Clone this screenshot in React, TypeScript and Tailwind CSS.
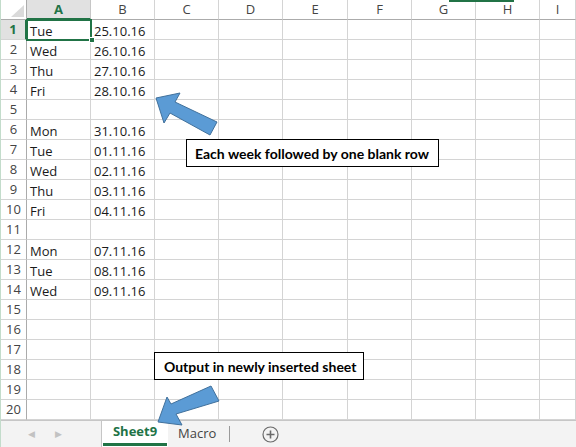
import React from "react";

const COLS = ["A", "B", "C", "D", "E", "F", "G", "H", "I"];
const COL_W = ["w-[64px]", "w-[64px]", "w-[64px]", "w-[64px]", "w-[65px]", "w-[64px]", "w-[64px]", "w-[64px]", "flex-1"];

const DATA: Record<number, [string, string]> = {
  1: ["Tue", "25.10.16"],
  2: ["Wed", "26.10.16"],
  3: ["Thu", "27.10.16"],
  4: ["Fri", "28.10.16"],
  6: ["Mon", "31.10.16"],
  7: ["Tue", "01.11.16"],
  8: ["Wed", "02.11.16"],
  9: ["Thu", "03.11.16"],
  10: ["Fri", "04.11.16"],
  12: ["Mon", "07.11.16"],
  13: ["Tue", "08.11.16"],
  14: ["Wed", "09.11.16"],
};

const rows = Array.from({ length: 20 }, (_, i) => i + 1);

function HeaderRow() {
  return (
    <div className="flex h-[20px]">
      <div className="relative w-[26px] shrink-0 border-r border-b border-[#ababab] bg-white">
        <svg className="absolute left-0 top-0" width="26" height="20">
          <polygon points="10,17 23,17 23,5" fill="#dadada" />
        </svg>
      </div>
      {COLS.map((c, i) => {
        const active = c === "A";
        return (
          <div
            key={c}
            className={
              "shrink-0 flex items-center justify-center text-[13px] leading-none " +
              COL_W[i] +
              (active
                ? " bg-[#e1e1e1] text-[#217346] font-bold border-b-2 border-b-[#217346] border-r border-r-[#c6c6c6]"
                : " bg-white text-[#444] border-b border-b-[#ababab] border-r border-r-[#d4d4d4]")
            }
          >
            {c}
          </div>
        );
      })}
    </div>
  );
}

function Row({ n }: { n: number }) {
  const d = DATA[n];
  const active = n === 1;
  return (
    <div className="flex h-[20px]">
      <div
        className={
          "w-[26px] shrink-0 flex items-center justify-center text-[13px] leading-none border-b border-[#d4d4d4] " +
          (active
            ? "bg-[#e1e1e1] text-[#217346] font-bold border-r-2 border-r-[#217346]"
            : "bg-white text-[#444] border-r border-r-[#ababab]")
        }
      >
        {n}
      </div>
      {COLS.map((c, i) => (
        <div
          key={c}
          className={
            "shrink-0 overflow-hidden whitespace-nowrap border-r border-b border-[#d4d4d4] pl-[3px] pt-[2px] text-[13px] leading-[18px] text-[#1a1a1a] " +
            COL_W[i]
          }
        >
          {d && i === 0 ? d[0] : null}
          {d && i === 1 ? d[1] : null}
        </div>
      ))}
    </div>
  );
}

function TabBar() {
  return (
    <div className="flex h-[27px] items-stretch border-t border-[#c6c6c6] bg-[#f3f3f3] text-[13px]">
      <div className="flex w-[100px] items-center gap-[20px] pl-[27px]">
        <span className="text-[9px] text-[#c2c2c2]">◀</span>
        <span className="text-[9px] text-[#c2c2c2]">▶</span>
      </div>
      <div className="flex w-[67px] flex-col border-l border-[#c6c6c6] bg-white">
        <div className="flex flex-1 items-center justify-center font-bold text-[#217346]">Sheet9</div>
        <div className="mx-[1px] mb-[1px] h-[3px] bg-[#217346]" />
      </div>
      <div className="flex w-[61px] items-center pl-[10px] text-[#444]">Macro</div>
      <div className="my-[5px] w-px bg-[#9a9a9a]" />
      <div className="flex w-[80px] items-center justify-center">
        <svg width="17" height="17" viewBox="0 0 17 17">
          <circle cx="8.5" cy="8.5" r="7.5" fill="none" stroke="#6a6a6a" strokeWidth="1.2" />
          <path d="M8.5 4.5v8M4.5 8.5h8" stroke="#6a6a6a" strokeWidth="1.6" />
        </svg>
      </div>
      <div className="flex-1" />
    </div>
  );
}

export default function App() {
  return (
    <div
      className="relative h-[447px] w-[576px] overflow-hidden bg-white border-l border-[#c3dccb]"
      style={{ fontFamily: '"Open Sans", "Noto Sans", sans-serif' }}
    >
      <div className="absolute left-[448px] top-0 h-[2px] w-[65px] bg-[#217346]" />
      <HeaderRow />
      {rows.map((n) => (
        <Row key={n} n={n} />
      ))}
      <TabBar />

      {/* selected cell A1 */}
      <div className="pointer-events-none absolute left-[25px] top-[19px] h-[22px] w-[66px] border-2 border-[#217346]" />
      <div className="absolute left-[88px] top-[37px] h-[6px] w-[6px] border border-white bg-[#217346]" />

      {/* callouts */}
      <div
        className="absolute left-[185px] top-[139px] flex h-[28px] w-[253px] items-center border border-black bg-white pl-[8px] text-[14px] font-bold text-black"
        style={{ fontFamily: 'Lato, "Open Sans", sans-serif' }}
      >
        Each week followed by one blank row
      </div>
      <div
        className="absolute left-[153px] top-[352px] flex h-[28px] w-[210px] items-center border border-black bg-white pl-[9px] text-[14px] font-bold text-black"
        style={{ fontFamily: 'Lato, "Open Sans", sans-serif' }}
      >
        Output in newly inserted sheet
      </div>

      <svg className="pointer-events-none absolute left-0 top-0" width="576" height="447">
        <polygon
          points="155,98 179,93 174,102 216,122 209,135 169,113 163,123"
          fill="#5b9bd5"
          stroke="#41719c"
          strokeWidth="1"
        />
        <polygon
          points="157,422 166,397 170,404 210,386 218,401 175,414 181,425"
          fill="#5b9bd5"
          stroke="#41719c"
          strokeWidth="1"
        />
      </svg>
    </div>
  );
}
